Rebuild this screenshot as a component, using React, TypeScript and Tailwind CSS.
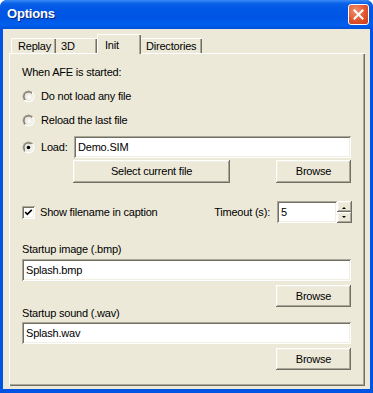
import React from "react";

const font = { fontFamily: '"Liberation Sans", Arial, sans-serif' };

const btn =
  "flex items-center justify-center bg-[#ECE9D8] text-black shadow-[inset_-1px_-1px_#716F64,inset_1px_1px_#ffffff,inset_-2px_-2px_#ACA899,inset_2px_2px_#F1EFE2]";
const field =
  "flex items-center bg-white pl-[4px] text-black shadow-[inset_1px_1px_#ACA899,inset_-1px_-1px_#ffffff,inset_2px_2px_#716F64,inset_-2px_-2px_#F1EFE2]";

function Radio({ checked }: { checked?: boolean }) {
  return (
    <svg width="13" height="13" viewBox="0 0 13 13" className="shrink-0">
      <defs>
        <linearGradient id="ro" x1="0" y1="0" x2="1" y2="1">
          <stop offset="0.5" stopColor="#ACA899" />
          <stop offset="0.5" stopColor="#ffffff" />
        </linearGradient>
        <linearGradient id="ri" x1="0" y1="0" x2="1" y2="1">
          <stop offset="0.5" stopColor="#716F64" />
          <stop offset="0.5" stopColor="#F1EFE2" />
        </linearGradient>
        <radialGradient id="rc" cx="0.6" cy="0.6" r="0.6">
          <stop offset="0" stopColor="#ffffff" />
          <stop offset="1" stopColor="#E2E0D6" />
        </radialGradient>
      </defs>
      <circle cx="6.5" cy="6.5" r="6" fill="url(#ro)" />
      <circle cx="6.5" cy="6.5" r="5" fill="url(#ri)" />
      <circle cx="6.5" cy="6.5" r="4" fill="url(#rc)" />
      {checked && <circle cx="6.5" cy="6.5" r="1.8" fill="#000" />}
    </svg>
  );
}

function Checkbox() {
  return (
    <div className="w-[13px] h-[13px] shrink-0 bg-white shadow-[inset_1px_1px_#ACA899,inset_-1px_-1px_#ffffff,inset_2px_2px_#716F64,inset_-2px_-2px_#F1EFE2] flex items-center justify-center">
      <svg width="13" height="13" viewBox="0 0 13 13">
        <polyline points="3.2,6 5.3,8.3 9.8,3.8" fill="none" stroke="#000" strokeWidth="1.7" />
      </svg>
    </div>
  );
}

export default function App() {
  return (
    <div
      className="w-[373px] h-[393px] flex flex-col bg-[#0054E3] rounded-t-[7px] overflow-hidden text-[11px] tracking-[-0.2px]"
      style={font}
    >
      {/* Title bar */}
      <div className="h-[29px] shrink-0 flex items-center pl-[7px] pr-[4px] bg-[linear-gradient(180deg,#3B8CF6_0%,#0A62E8_12%,#0058E6_30%,#0054E3_60%,#0060EE_85%,#0050DA_100%)]">
        <span className="text-white font-bold text-[13px] tracking-[-0.2px] [text-shadow:1px_1px_0_#0B2A8A] pb-[1px]">
          Options
        </span>
        <div className="ml-auto w-[21px] h-[21px] rounded-[3px] border border-white bg-[radial-gradient(circle_at_35%_30%,#F29070_0%,#E0552C_55%,#C83A17_100%)] flex items-center justify-center">
          <svg width="13" height="13" viewBox="0 0 13 13">
            <path d="M2.5 2.5 L10.5 10.5 M10.5 2.5 L2.5 10.5" stroke="#fff" strokeWidth="2" strokeLinecap="square" />
          </svg>
        </div>
      </div>

      {/* Body */}
      <div className="flex-1 mx-[3px] mb-[4px] bg-[#ECE9D8] flex flex-col pl-[6px] pr-[5px] pt-[5px] pb-[3px]">
        {/* Tabs */}
        <div className="h-[19px] flex items-end pl-[2px] shrink-0">
          <div className="w-[45px] h-[15px] flex items-center pl-[6px] pt-[1px] border-l border-t border-white rounded-tl-[2px] shadow-[inset_-1px_0_#716F64,inset_-2px_0_#ACA899] text-black">
            Replay
          </div>
          <div className="w-[41px] h-[15px] flex items-center pl-[5px] pt-[1px] border-t border-white shadow-[inset_-1px_0_#716F64,inset_-2px_0_#ACA899] text-black">
            3D
          </div>
          <div className="relative z-10 w-[44px] h-[20px] mb-[-1px] flex items-start pl-[7px] pt-[2px] bg-[#ECE9D8] border-l border-t border-white rounded-tl-[2px] shadow-[inset_-1px_0_#716F64,inset_-2px_0_#ACA899] text-black">
            Init
          </div>
          <div className="w-[61px] h-[15px] flex items-center pl-[5px] pt-[1px] border-t border-white shadow-[inset_-1px_0_#716F64,inset_-2px_0_#ACA899] text-black">
            Directories
          </div>
        </div>

        {/* Panel */}
        <div className="flex-1 w-[356px] flex flex-col border-l border-t border-white shadow-[inset_-1px_-1px_#716F64,inset_-2px_-2px_#ACA899] pl-[12px] pr-[14px] pt-[10px] text-black">
          <div className="h-[16px] flex items-center">When AFE is started:</div>

          <div className="h-[16px] mt-[8px] flex items-center gap-[6px]">
            <Radio />
            <span>Do not load any file</span>
          </div>

          <div className="h-[16px] mt-[8px] flex items-center gap-[6px]">
            <Radio />
            <span>Reload the last file</span>
          </div>

          <div className="h-[22px] mt-[8px] flex items-center">
            <Radio checked />
            <span className="ml-[6px] w-[33px]">Load:</span>
            <div className={field + " flex-1 h-[22px]"}>Demo.SIM</div>
          </div>

          <div className="h-[23px] mt-[2px] flex items-center">
            <div className={btn + " ml-[51px] w-[157px] h-[23px]"}>Select current file</div>
            <div className={btn + " ml-auto w-[75px] h-[23px]"}>Browse</div>
          </div>

          <div className="h-[22px] mt-[18px] flex items-center">
            <Checkbox />
            <span className="ml-[5px]">Show filename in caption</span>
            <span className="ml-auto">Timeout (s):</span>
            <div className={field + " ml-[7px] w-[60px] h-[22px]"}>5</div>
            <div className="w-[15px] h-[22px] mr-[-1px] flex flex-col">
              <div className={btn + " h-[11px]"}>
                <svg width="7" height="4" viewBox="0 0 7 4">
                  <polygon points="1,4 5,4 3,2" fill="#000" />
                </svg>
              </div>
              <div className={btn + " h-[11px]"}>
                <svg width="7" height="4" viewBox="0 0 7 4">
                  <polygon points="1,0 5,0 3,2" fill="#000" />
                </svg>
              </div>
            </div>
          </div>

          <div className="h-[12px] mt-[20px] flex items-center">Startup image (.bmp)</div>
          <div className={field + " h-[22px] mt-[4px]"}>Splash.bmp</div>
          <div className="h-[22px] mt-[4px] flex">
            <div className={btn + " ml-auto w-[75px] h-[22px]"}>Browse</div>
          </div>

          <div className="h-[12px] mt-[0px] flex items-center">Startup sound (.wav)</div>
          <div className={field + " h-[22px] mt-[3px]"}>Splash.wav</div>
          <div className="h-[22px] mt-[4px] flex">
            <div className={btn + " ml-auto w-[75px] h-[22px]"}>Browse</div>
          </div>
        </div>
      </div>
    </div>
  );
}
